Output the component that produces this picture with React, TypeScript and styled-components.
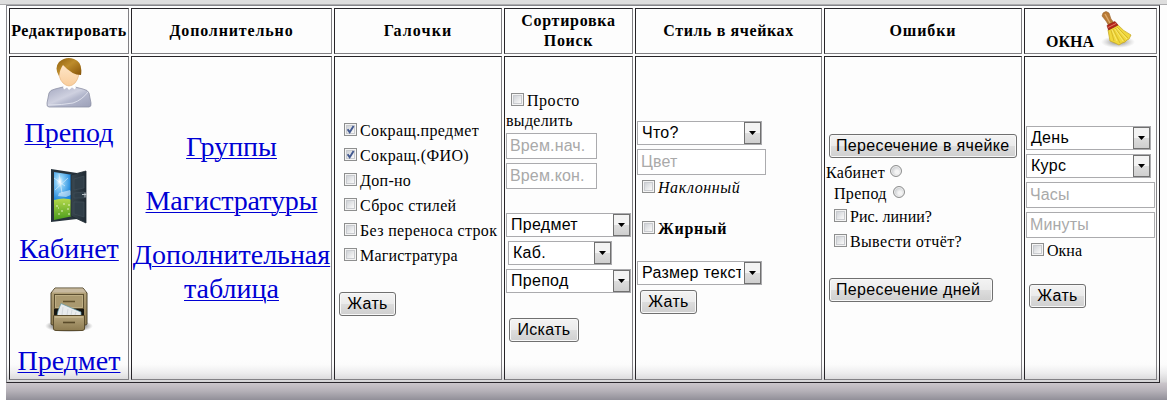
import React from "react";
import styled, { createGlobalStyle, css } from "styled-components";

const Global = createGlobalStyle`
  * { box-sizing: border-box; }
  body {
    margin: 0;
    background: #fff;
    font-family: "Liberation Serif", "Times New Roman", serif;
    font-size: 16px;
    color: #000;
    overflow: hidden;
  }
`;

const Page = styled.div`
  height: 400px;
  display: flex;
  flex-direction: column;
`;
const TopBar = styled.div`
  flex: none;
  height: 5px;
  background: #dedede;
  border-bottom: 1px solid #acacae;
`;
const Body = styled.main`
  flex: 1;
  margin-left: 6px;
  background: linear-gradient(
    #fdfdfd 0, #fdfdfd 355px, #fbfbfb 360px, #ededee 368px, #d4d3d5 377px,
    #cbc6cb 378px, #b5b1b8 386px, #918f98 395px
  );
`;
const Table = styled.div`
  width: 1154px;
  height: 378px;
  display: grid;
  grid-template-columns: 120px 201px 168px 129px 187px 198px 133px;
  grid-template-rows: 46px 324px;
  gap: 2px;
  padding: 2px;
  border: 1px solid;
  border-color: #85858a #2a272c #2a272c #85858a;
`;
const cell = css`
  min-width: 0;
  border: 1px solid;
  border-color: #262428 #818084 #818084 #262428;
`;
const Head = styled.div`
  ${cell}
  display: flex;
  align-items: center;
  justify-content: center;
  text-align: center;
  font-weight: bold;
  line-height: 20px;
  white-space: nowrap;
`;
const HeadText = styled.span<{ $ls?: number; $drop?: number }>`
  letter-spacing: ${(p) => p.$ls ?? 0.6}px;
  padding-top: ${(p) => p.$drop ?? 0}px;
`;
const Column = styled.div<{ $top: number; $center?: boolean }>`
  ${cell}
  display: flex;
  flex-direction: column;
  align-items: ${(p) => (p.$center ? "center" : "flex-start")};
  padding-top: ${(p) => p.$top}px;
`;
const Link = styled.a<{ $gap?: number; $ls?: number }>`
  color: #0000d4;
  font-size: 28px;
  line-height: 34px;
  text-align: center;
  text-decoration: underline;
  text-decoration-thickness: 1px;
  text-underline-offset: 2px;
  letter-spacing: ${(p) => p.$ls ?? 0}px;
  margin-top: ${(p) => p.$gap ?? 0}px;
  white-space: nowrap;
`;
const IconSlot = styled.svg<{ $gap?: number }>`
  display: block;
  flex: none;
  margin-top: ${(p) => p.$gap ?? 0}px;
`;
const Option = styled.label<{ $gap?: number; $indent?: number; $tone?: "bold" | "italic"; $space?: number }>`
  display: flex;
  align-items: flex-start;
  height: 13px;
  gap: ${(p) => p.$space ?? 3}px;
  margin: ${(p) => p.$gap ?? 0}px 0 0 ${(p) => p.$indent ?? 0}px;
  line-height: 16px;
  white-space: nowrap;
  font-weight: ${(p) => (p.$tone === "bold" ? "bold" : "normal")};
  font-style: ${(p) => (p.$tone === "italic" ? "italic" : "normal")};
`;
const Box = styled.span`
  flex: none;
  width: 13px;
  height: 13px;
  border: 1px solid #8e8f8f;
  background: linear-gradient(135deg, #c3c7cd, #f6f6f6 75%);
  box-shadow: inset 0 0 0 1px #f4f4f4, inset 0 0 0 2px #c9cbcf;
  svg { display: block; }
`;
const Caption = styled.span<{ $ls?: number }>`
  letter-spacing: ${(p) => p.$ls ?? 0.3}px;
`;
const Radio = styled.span`
  flex: none;
  width: 12px;
  height: 12px;
  border-radius: 50%;
  border: 1px solid #8e8f8f;
  background: radial-gradient(circle at 60% 60%, #f4f4f4 20%, #c2c5c9 75%);
  box-shadow: inset 0 0 0 1px #eeeeee;
`;
const Wrapped = styled.div`
  height: 20px;
  margin: 5px 0 0 1px;
  line-height: 20px;
  letter-spacing: 0.3px;
`;
const control = css<{ $gap?: number; $indent?: number; $w: number }>`
  flex: none;
  width: ${(p) => p.$w}px;
  margin: ${(p) => p.$gap ?? 0}px 0 0 ${(p) => p.$indent ?? 0}px;
  font-family: "Liberation Sans", Arial, sans-serif;
  font-size: 16px;
`;
const Field = styled.input`
  ${control}
  height: 26px;
  padding: 0 2px 1px 3px;
  border: 1px solid #ababae;
  border-radius: 0;
  outline: 0;
  background: #fff;
  letter-spacing: 0.15px;
  &::placeholder { color: #a9a9a9; opacity: 1; }
`;
const SelectBox = styled.div`
  ${control}
  display: flex;
  height: 24px;
  border: 1px solid #ababae;
  background: #fff;
`;
const Value = styled.span`
  flex: 1;
  min-width: 0;
  overflow: hidden;
  white-space: nowrap;
  padding-left: 4px;
  margin-right: 3px;
  line-height: 21px;
  letter-spacing: 0.28px;
`;
const Arrow = styled.span`
  flex: none;
  width: 17px;
  height: 22px;
  display: grid;
  place-items: center;
  border: 1px solid #707070;
  background: linear-gradient(#f3f3f3 0 48%, #dddddd 50%, #cfcfcf);
`;
const Button = styled.button<{ $left?: boolean }>`
  ${control}
  height: 24px;
  padding: 0 0 1px ${(p) => (p.$left ? 6 : 0)}px;
  text-align: ${(p) => (p.$left ? "left" : "center")};
  letter-spacing: 0.34px;
  color: #000;
  border: 1px solid #707070;
  border-radius: 3px;
  background: linear-gradient(#f3f3f3 0, #ebebeb 49%, #dddddd 51%, #cfcfcf);
  box-shadow: inset 0 0 0 1px #f8f8f8;
  white-space: nowrap;
`;

type Place = { gap?: number; indent?: number };

const Select = ({ gap, indent, w = 125, children }: Place & { w?: number; children: string }) => (
  <SelectBox $gap={gap} $indent={indent} $w={w}>
    <Value>{children}</Value>
    <Arrow>
      <svg width="7" height="4" viewBox="0 0 7 4"><path d="M0 0H7L3.5 4Z" /></svg>
    </Arrow>
  </SelectBox>
);

const Check = ({ gap, indent, on, tone, ls, children }: Place & {
  on?: boolean; tone?: "bold" | "italic"; ls?: number; children: string;
}) => (
  <Option $gap={gap} $indent={indent} $tone={tone}>
    <Box>
      {on && (
        <svg width="11" height="11" viewBox="0 0 11 11">
          <path d="M2.6 5.2L4.7 8.2L8.6 2" fill="none" stroke="#43598f" strokeWidth="1.9" />
        </svg>
      )}
    </Box>
    <Caption $ls={ls}>{children}</Caption>
  </Option>
);

const Person = () => (
  <IconSlot width="46" height="51" viewBox="0 0 46 51">
    <defs>
      <linearGradient id="shirt" x1="0" y1="0" x2="1" y2="1">
        <stop offset="0" stopColor="#a4a8c0" /><stop offset=".45" stopColor="#cfd1e0" />
        <stop offset=".6" stopColor="#b4b8cd" /><stop offset="1" stopColor="#9ca0b8" />
      </linearGradient>
      <linearGradient id="skin" x1="0" y1="0" x2="0" y2="1">
        <stop offset="0" stopColor="#ffe9cd" /><stop offset="1" stopColor="#f9cd9c" />
      </linearGradient>
      <linearGradient id="hair" x1="0" y1="0" x2="1" y2="1">
        <stop offset="0" stopColor="#8c5d0c" /><stop offset=".45" stopColor="#bd8c2c" />
        <stop offset="1" stopColor="#835006" />
      </linearGradient>
    </defs>
    <path d="M3 50Q0.500 50 1 46L3 36Q4 33 9 32L17 30H29L37 32Q42 33 43 36L45 46Q45.500 50 43 50Z" fill="url(#shirt)" stroke="#8e92a6" strokeWidth=".8" />
    <path d="M42 35Q36 43 27 46Q16 48 2 48" fill="none" stroke="#e2e4ee" strokeWidth=".9" />
    <path d="M17 30L18 32.500L21 30.500L23 33L26 30.500L29 32.500L30 30L27 27H19Z" fill="#fff" />
    <path d="M13 11Q12 21 17 26Q23 32 29 26Q34 20 33 10L24 5L15 7Z" fill="url(#skin)" stroke="#e2ac72" strokeWidth=".6" />
    <path d="M13 19Q8 11 13 5Q20-1 28 2Q37 5 35 18Q26 18 17 8Q14 12 13 19Z" fill="url(#hair)" />
  </IconSlot>
);

const Door = () => (
  <IconSlot $gap={19} width="36" height="55" viewBox="0 0 36 55">
    <defs>
      <radialGradient id="sky" cx=".3" cy=".3" r=".6">
        <stop offset="0" stopColor="#fff" /><stop offset=".3" stopColor="#8ed0f8" />
        <stop offset="1" stopColor="#2189dc" />
      </radialGradient>
      <linearGradient id="grass" x1="0" y1="0" x2="0" y2="1">
        <stop offset="0" stopColor="#b5d94c" /><stop offset="1" stopColor="#4a9c1c" />
      </linearGradient>
      <linearGradient id="leaf"><stop offset="0" stopColor="#38464f" /><stop offset="1" stopColor="#202b34" /></linearGradient>
    </defs>
    <path d="M0 0L26 4V50L0 53Z" fill="#27333c" />
    <path d="M3 3L22 6V35H3Z" fill="url(#sky)" />
    <path d="M3 31Q13 28 22 31V47L3 51Z" fill="url(#grass)" />
    <path d="M8 24L19 21L22 25L15 28L7 27Z" fill="#fff" opacity=".5" />
    <path d="M3 9L14 17M8 5L11 24M4 21L17 9" stroke="#fff" opacity=".5" />
    <path d="M5 37h2m5-2h2m2 5h2m-11 5h2m8 0h2m-9-3h2m5-6h2m-12 3h1" stroke="#f8ffe1" strokeWidth="1.100" opacity=".8" />
    <path d="M20 6L35 2V54L20 47Z" fill="url(#leaf)" stroke="#202a31" strokeWidth=".8" />
    <path d="M23 10L33 7V19L23 21ZM23 24L33 23V29L23 29ZM23 33L33 33V48L23 45Z" fill="#303e48" stroke="#43515a" strokeWidth=".6" />
    <path d="M31 25.500h4.500M34 23.500v5" stroke="#b9c2c8" strokeWidth="1.100" />
  </IconSlot>
);

const Cabinet = () => (
  <IconSlot $gap={21} width="48" height="46" viewBox="0 0 48 46">
    <defs>
      <radialGradient id="shade"><stop offset="0" stopColor="#444" /><stop offset=".7" stopColor="#777" stopOpacity=".7" /><stop offset="1" stopColor="#999" stopOpacity="0" /></radialGradient>
      <linearGradient id="wood" x1="0" y1="0" x2="0" y2="1"><stop offset="0" stopColor="#b7a67e" /><stop offset="1" stopColor="#8d7b50" /></linearGradient>
    </defs>
    <ellipse cx="24" cy="39" rx="24" ry="6.500" fill="url(#shade)" />
    <path d="M10 1H38L42 6V37Q42 38 40 38H8Q6 38 6 37V6Z" fill="url(#wood)" stroke="#4e442b" />
    <path d="M10 1.500H38L41 5.500H7Z" fill="#c8baa0" />
    <rect x="9.500" y="7.500" width="29" height="14" fill="#aa996f" stroke="#5d5031" />
    <rect x="10.500" y="8.500" width="27" height="12" fill="none" stroke="#c6b78e" strokeWidth=".7" />
    <path d="M18 14.500H30" stroke="#62532f" strokeWidth="1.500" />
    <rect x="9" y="22" width="30" height="6" fill="#171611" />
    <path d="M16 16.500L36 25V29H12L13 24Z" fill="#e9ecee" stroke="#5d97a6" strokeWidth=".7" />
    <path d="M18 20L17 28M23 22L22 28M27 23L26 28M31 25L30 28" stroke="#d3d8dc" />
    <path d="M8.500 28.500H39.500V42Q39 43.500 37 43.500H11Q9 43.500 8.500 42Z" fill="url(#wood)" stroke="#5b4d2e" />
    <path d="M10 30H38" stroke="#d2c49c" /><path d="M18 35.500H30" stroke="#594a29" strokeWidth="1.600" />
  </IconSlot>
);

const BroomSlot = styled.span`
  display: block;
  margin: -3px 0 0 7px;
`;
const Broom = () => (
  <BroomSlot>
    <IconSlot width="34" height="38" viewBox="0 0 34 38">
      <defs>
        <radialGradient id="dust"><stop offset="0" stopColor="#777" /><stop offset="1" stopColor="#aaa" stopOpacity="0" /></radialGradient>
      </defs>
      <ellipse cx="17" cy="31" rx="17" ry="6" fill="url(#dust)" />
      <path d="M2 2Q5-1 8 2L10 8L14 13L8 15L5 10L1 5Z" fill="#b87a36" stroke="#9a6730" strokeWidth=".6" />
      <path d="M4 3L9 12" stroke="#e0ac6c" strokeWidth="1.400" />
      <path d="M7 19L17 14Q22 20 30 24L28 28L26 29L24 31L21 32L18 34L14 32L9 30Z" fill="#f0d83c" stroke="#c9aa28" strokeWidth=".8" />
      <path d="M10 19L13 30M12 18L19 32M14 17L24 30M16 16L27 27" stroke="#d2b126" strokeWidth=".8" />
      <path d="M11 19L16 30M14 18L22 30M16 17L26 28" stroke="#fbec7c" strokeWidth=".8" />
      <path d="M6 14.500L14 10.500L17 14L7.500 19Z" fill="#b82418" stroke="#811b12" strokeWidth=".6" />
      <path d="M7 16.500L15 12.500" stroke="#e58f7c" strokeWidth=".8" />
    </IconSlot>
  </BroomSlot>
);

export default function App() {
  return (
    <Page>
      <Global />
      <TopBar />
      <Body>
        <Table>
          <Head><HeadText>Редактировать</HeadText></Head>
          <Head><HeadText $ls={0.85}>Дополнительно</HeadText></Head>
          <Head><HeadText $ls={1.1}>Галочки</HeadText></Head>
          <Head><HeadText $ls={0.7}>Сортировка<br />Поиск</HeadText></Head>
          <Head><HeadText>Стиль в ячейках</HeadText></Head>
          <Head><HeadText $ls={0.9}>Ошибки</HeadText></Head>
          <Head><HeadText $drop={22} $ls={0}>ОКНА</HeadText><Broom /></Head>

          <Column $top={0} $center>
            <Person />
            <Link $gap={8}>Препод</Link>
            <Door />
            <Link $gap={8}>Кабинет</Link>
            <Cabinet />
            <Link $gap={11}>Предмет</Link>
          </Column>
          <Column $top={73} $center>
            <Link>Группы</Link>
            <Link $gap={20} $ls={-0.1}>Магистратуры</Link>
            <Link $gap={20}>Дополнительная<br />таблица</Link>
          </Column>
          <Column $top={66}>
            <Check indent={9} ls={0.38} on>Сокращ.предмет</Check>
            <Check indent={9} ls={0.4} gap={12} on>Сокращ.(ФИО)</Check>
            <Check indent={9} gap={12}>Доп-но</Check>
            <Check indent={9} gap={12}>Сброс стилей</Check>
            <Check indent={9} ls={0.35} gap={12}>Без переноса строк</Check>
            <Check indent={9} ls={0.2} gap={12}>Магистратура</Check>
            <Button $gap={31} $indent={4} $w={57}>Жать</Button>
          </Column>
          <Column $top={36}>
            <Check indent={6} ls={0.5}>Просто</Check>
            <Wrapped>выделить</Wrapped>
            <Field $w={91} $gap={2} $indent={1} placeholder="Врем.нач." />
            <Field $w={91} $gap={4} $indent={1} placeholder="Врем.кон." />
            <Select gap={24} indent={1}>Предмет</Select>
            <Select gap={4} indent={3} w={104}>Каб.</Select>
            <Select gap={4} indent={1}>Препод</Select>
            <Button $gap={25} $indent={4} $w={70}>Искать</Button>
          </Column>
          <Column $top={64}>
            <Select indent={1}>Что?</Select>
            <Field $w={129} $gap={4} $indent={1} placeholder="Цвет" />
            <Check indent={6} gap={5} ls={0.55} tone="italic">Наклонный</Check>
            <Check indent={6} gap={28} ls={0.7} tone="bold">Жирный</Check>
            <Select indent={1} gap={27}>Размер текста</Select>
            <Button $gap={5} $indent={4} $w={57}>Жать</Button>
          </Column>
          <Column $top={77}>
            <Button $left $indent={4} $w={188}>Пересечение в ячейке</Button>
            <Option $gap={7} $indent={1} $space={5}><Caption>Кабинет</Caption><Radio /></Option>
            <Option $gap={8} $indent={9} $space={6}><Caption>Препод</Caption><Radio /></Option>
            <Check indent={9} ls={0} gap={10}>Рис. линии?</Check>
            <Check indent={9} ls={0.35} gap={12}>Вывести отчёт?</Check>
            <Button $left $gap={31} $indent={4} $w={164}>Пересечение дней</Button>
          </Column>
          <Column $top={69}>
            <Select indent={1}>День</Select>
            <Select gap={4} indent={1}>Курс</Select>
            <Field $w={129} $gap={4} $indent={1} placeholder="Часы" />
            <Field $w={129} $gap={4} $indent={1} placeholder="Минуты" />
            <Check indent={6} ls={0} gap={5}>Окна</Check>
            <Button $gap={28} $indent={4} $w={57}>Жать</Button>
          </Column>
        </Table>
      </Body>
    </Page>
  );
}
